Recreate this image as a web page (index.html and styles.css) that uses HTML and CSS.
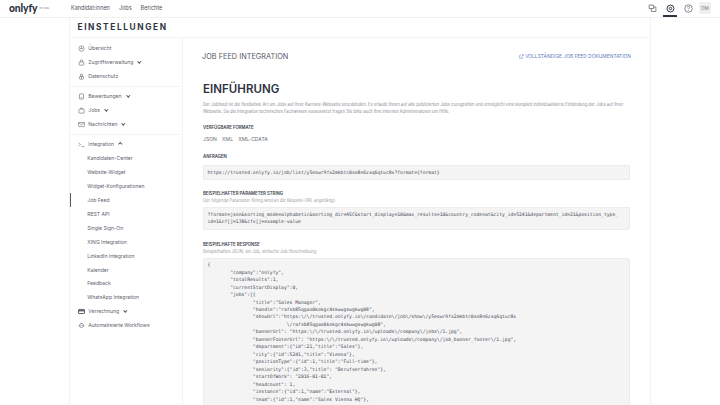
FILE: index.html
```html
<!DOCTYPE html>
<html lang="de">
<head>
<meta charset="utf-8">
<title>Einstellungen</title>
<link rel="stylesheet" href="styles.css">
</head>
<body>
<header class="topbar">
  <div class="logo"><span class="logo-word">onlyfy</span><span class="logo-by">by XING</span></div>
  <nav class="mainnav"><a>Kandidat:innen</a><a>Jobs</a><a>Berichte</a></nav>
  <div class="tools">
    <span class="tool"><svg viewBox="0 0 12 12" class="ico"><path d="M1.500 1.500h6v4.500h-6zM4.500 6v4h6V4H7.500"/></svg></span>
    <span class="tool tool-active"><svg viewBox="0 0 12 12" class="ico ico-strong"><circle cx="6" cy="6" r="4.600"/><circle cx="6" cy="6" r="1.600"/></svg></span>
    <span class="tool"><svg viewBox="0 0 12 12" class="ico"><circle cx="6" cy="6" r="5"/><path d="M4.400 4.600C4.500 2.800 7.600 2.900 7.600 4.600 7.600 5.800 6 5.800 6 7M6 8.200v1"/></svg></span>
    <span class="avatar">DM</span>
  </div>
</header>
<div class="shell">
  <div class="titlebar"><h1>EINSTELLUNGEN</h1></div>
  <div class="columns">
    <aside class="sidebar">
      <ul class="group group-first">
        <li><svg viewBox="0 0 12 12" class="ico"><circle cx="6" cy="6" r="4.500"/><path d="M6 3v3.500M3.500 6h5"/></svg>Übersicht</li>
        <li><svg viewBox="0 0 12 12" class="ico"><rect x="2" y="5" width="8" height="5.500" rx="1"/><path d="M4 5V3.500a2 2 0 0 1 4 0V5"/></svg>Zugriffsverwaltung<i class="chev"></i></li>
        <li><svg viewBox="0 0 12 12" class="ico"><circle cx="6" cy="3.500" r="2"/><rect x="2.500" y="6" width="7" height="4.500" rx="1"/><path d="M6 6v4.500"/></svg>Datenschutz</li>
      </ul>
      <ul class="group">
        <li><svg viewBox="0 0 12 12" class="ico"><rect x="2.500" y="1.500" width="7" height="9" rx="1"/><path d="M4.500 8h3"/></svg>Bewerbungen<i class="chev"></i></li>
        <li><svg viewBox="0 0 12 12" class="ico"><rect x="1.500" y="3.500" width="9" height="7" rx="1"/><path d="M4.500 3.500V2h3v1.500"/></svg>Jobs<i class="chev"></i></li>
        <li><svg viewBox="0 0 12 12" class="ico"><rect x="1" y="2.500" width="10" height="7" rx="1"/><path d="M1 3l5 3.500L11 3"/></svg>Nachrichten<i class="chev"></i></li>
      </ul>
      <ul class="group group-last">
        <li><svg viewBox="0 0 12 12" class="ico"><path d="M1 3l3 3-3 3M6 9.500h5"/></svg>Integration<i class="chev chev-up"></i></li>
        <li class="sub">Kandidaten-Center</li>
        <li class="sub">Website-Widget</li>
        <li class="sub">Widget-Konfigurationen</li>
        <li class="sub sub-active">Job Feed</li>
        <li class="sub">REST API</li>
        <li class="sub">Single Sign-On</li>
        <li class="sub">XING Integration</li>
        <li class="sub">LinkedIn Integration</li>
        <li class="sub">Kalender</li>
        <li class="sub">Feedback</li>
        <li class="sub">WhatsApp Integration</li>
        <li><svg viewBox="0 0 12 12" class="ico ico-strong"><rect x="1" y="2.500" width="10" height="7" rx=".8"/><path d="M1 4.800h10" class="thick"/></svg>Verrechnung<i class="chev"></i></li>
        <li><svg viewBox="0 0 12 12" class="ico"><circle cx="6" cy="6" r="3.500"/><path d="M1 7h2M9 7h2M6 1.500v1.500M4.500 6h3"/></svg>Automatisierte Workflows</li>
      </ul>
    </aside>
    <main class="content">
      <div class="headline">
        <h2>JOB FEED INTEGRATION</h2>
        <a class="doclink"><svg viewBox="0 0 12 12" class="ico-link"><path d="M9 7v3.500H1.500V3H5M7 1.500h3.500V5M10.500 1.500L5.500 6.500"/></svg>VOLLSTÄNDIGE JOB FEED DOKUMENTATION</a>
      </div>
      <h3>EINFÜHRUNG</h3>
      <p class="intro">Der Jobfeed ist die flexibelste Art um Jobs auf Ihrer Karriere-Webseite einzubinden. Es erlaubt Ihnen auf alle publizierten Jobs zuzugreifen und ermöglicht eine komplett individualisierte Einbindung der Jobs auf Ihrer Webseite. Da die Integration technisches Fachwissen voraussetzt fragen Sie bitte auch Ihre internen Administratoren um Hilfe.</p>
      <h4 class="label label-formats">VERFÜGBARE FORMATE</h4>
      <div class="formats"><span>JSON</span><span>XML</span><span>XML-CDATA</span></div>
      <h4 class="label label-requests">ANFRAGEN</h4>
      <pre class="code code-first">https://trusted.onlyfy.io/job/list/y5eowr9fx2mkbtc0so8n6zxq6qtuc8x?format={format}</pre>
      <h4 class="label label-params">BEISPIELHAFTER PARAMETER STRING</h4>
      <p class="hint">Der folgende Parameter-String wird an die Request-URL angehängt.</p>
      <pre class="code">?format=json&amp;sorting_mode=alphabetic&amp;sorting_dir=ASC&amp;start_display=10&amp;max_results=10&amp;country_code=at&amp;city_id=5241&amp;department_id=21&amp;position_type_
id=1&amp;cf[]=138&amp;cfv[]=example-value</pre>
      <h4 class="label label-response">BEISPIELHAFTE RESPONSE</h4>
      <p class="hint">Beispielhaftes JSON, ein Job, einfache Job-Beschreibung</p>
      <pre class="code code-long">{
        "company":"onlyfy",
        "totalResults":1,
        "currentStartDisplay":0,
        "jobs":[{
                "title":"Sales Manager",
                "handle":"rafsb85qgao0kokgc4skwwgswgkwg08",
                "showUrl":"https:\/\/trusted.onlyfy.io\/candidate\/job\/show\/y5eowr9fx2mkbtc0so8n6zxq6qtuc8x
                            \/rafsb85qgao0kokgc4skwwgswgkwg08",
                "bannerUrl": "https:\/\/trusted.onlyfy.io\/uploads\/company\/jobs\/1.jpg",
                "bannerFooterUrl": "https:\/\/trusted.onlyfy.io\/uploads\/company\/job_banner_footer\/1.jpg",
                "department":{"id":21,"title":"Sales"},
                "city":{"id":5241,"title":"Vienna"},
                "positionType":{"id":1,"title":"Full-time"},
                "seniority":{"id":3,"title": "Berufserfahren"},
                "startOfWork": "2016-01-01",
                "headcount": 1,
                "instance":{"id":1,"name":"External"},
                "team":{"id":1,"name":"Sales Vienna HQ"},</pre>
    </main>
  </div>
</div>
</body>
</html>
```
FILE: styles.css
```css
* { box-sizing: border-box; }
html, body { margin: 0; height: 405px; overflow: hidden; background: #fff; }
body { font-family: Inter, "Liberation Sans", sans-serif; color: #5a606b; }
h1, h2, h3, h4, p, ul, pre { margin: 0; padding: 0; }
ul { list-style: none; }

.topbar { height: 17.500px; display: flex; align-items: center; padding: 0 9px; border-bottom: 1px solid #f1f1f1; }
.logo { width: 62px; display: flex; align-items: center; gap: 2px; }
.logo-word { font-family: Lato, sans-serif; font-weight: 900; font-size: 10.300px; color: #2d3342; letter-spacing: -.1px; line-height: 15px; }
.logo-by { font-size: 2.500px; color: #777; }
.mainnav { display: flex; gap: 9px; font-size: 5.500px; color: #4f5561; }
.tools { margin-left: auto; display: flex; align-items: center; height: 100%; }
.tool { width: 18px; height: 100%; display: flex; align-items: center; justify-content: center; position: relative; }
.tool-active::after { content: ""; position: absolute; left: 2px; right: 2px; bottom: 0; height: 1.500px; background: #2d3446; }
.tool .ico { margin: 0; width: 9px; height: 9px; }
.ico { width: 7px; height: 7px; fill: none; stroke: #5f6570; stroke-width: 1; margin-right: 3.300px; flex: none; }
.ico-strong { stroke: #2d3446; stroke-width: 1.300; }
.thick { stroke-width: 1.800; }
.avatar { width: 12px; height: 12px; margin-left: 2px; border-radius: 2px; background: #efefef; color: #777; font-size: 4.600px; display: flex; align-items: center; justify-content: center; }

.shell { width: 582px; margin-left: 69px; border-right: 1px solid #f3f3f3; border-left: 1px solid #f3f3f3; }
.titlebar { height: 20.500px; display: flex; align-items: center; padding-left: 7.500px; border-bottom: 1.500px solid #f4f4f4; }
h1 { font-size: 8.300px; font-weight: 700; letter-spacing: 1.620px; color: #2d3342; }

.columns { display: flex; }
.sidebar { width: 113px; flex: none; border-right: 1.500px solid #f4f4f4; min-height: 400px; }
.group { padding: 2.500px 0; border-bottom: 1.500px solid #f4f4f4; }
.group-first { padding-top: 3.500px; }
.group-last { border-bottom: 0; }
.group li { height: 13.950px; display: flex; align-items: center; padding-left: 8px; font-size: 5.050px; color: #5f6570; position: relative; }
.group li.sub { padding-left: 17.300px; }
.sub-active::before { content: ""; position: absolute; left: 0; top: 0; bottom: 0; width: 1.300px; background: #565c68; }
.chev { width: 2.600px; height: 2.600px; margin-left: 5px; margin-top: -1.500px; border-right: .8px solid #555; border-bottom: .8px solid #555; transform: rotate(45deg); }
.chev-up { margin-top: 1px; transform: rotate(225deg); }

.content { flex: 1; padding: 0 20px 0 20px; min-width: 0; }
.headline { display: flex; justify-content: space-between; align-items: center; height: 36px; }
h2 { font-size: 7.350px; font-weight: 400; color: #555b66; margin-left: -1px; }
.doclink { font-size: 4.900px; color: #5f81c0; display: flex; align-items: center; margin-right: -1px; }
.ico-link { width: 5px; height: 5px; fill: none; stroke: #5f81c0; stroke-width: 1.200; margin-right: 1px; }
h3 { margin-top: 7px; font-size: 11.500px; line-height: 16px; font-weight: 600; color: #2d3342; letter-spacing: .05px; }
.intro { margin-top: 3.500px; font-size: 4.150px; line-height: 7px; color: #8a8d93; }
.label { font-size: 4.300px; font-weight: 600; color: #3b404b; line-height: 6px; }
.label-formats { margin-top: 10.500px; }
.formats { display: flex; gap: 5.200px; margin-top: 3.800px; font-size: 5.100px; line-height: 8px; color: #6a6f78; }
.label-requests { margin-top: 11.700px; }
.label-params { margin-top: 10.500px; }
.label-response { margin-top: 11.800px; }
.hint { font-size: 4.150px; line-height: 6px; color: #9a9da3; margin-top: 1px; }
.code { background: #f4f4f4; border: 1px solid #ececec; border-radius: 1px; margin-top: 3px; padding: 3px 3.500px; font-family: "DejaVu Sans Mono", monospace; font-size: 4.720px; line-height: 7.470px; color: #484c54; overflow: hidden; }
.code-first { margin-top: 4.500px; }
.code-long { min-height: 200px; padding-top: 2.500px; }
```
